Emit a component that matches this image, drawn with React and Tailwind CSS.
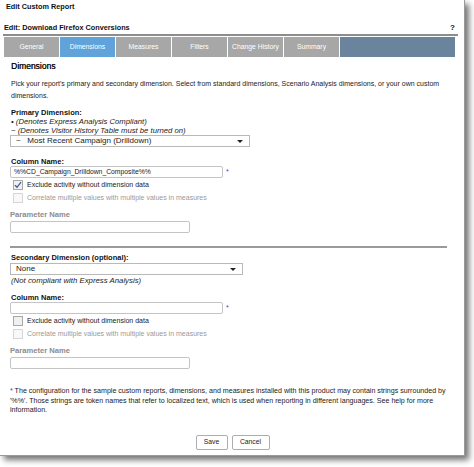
import React from "react";

const tabs = ["General", "Dimensions", "Measures", "Filters", "Change History", "Summary"];

function SelectBox({ value, width }) {
  return (
    <div
      className={`flex items-center justify-between h-[12px] border border-[#b9b9b9] bg-white pl-[5px] pr-[6px] text-[8px] leading-[10px] text-[#222] ${width}`}
    >
      <span className="whitespace-pre">{value}</span>
      <span className="w-0 h-0 border-l-[3px] border-r-[3px] border-t-[3px] border-l-transparent border-r-transparent border-t-[#222]" />
    </div>
  );
}

function TextBox({ value, width }) {
  return (
    <div
      className={`h-[12px] border border-[#c4c4c4] rounded-[2px] bg-white pl-[3px] text-[6.8px] leading-[10px] text-[#222] ${width}`}
    >
      {value}
    </div>
  );
}

function Check({ checked, disabled, label }) {
  return (
    <div className="flex items-center h-[13px] pl-[3px] gap-[4px]">
      <span
        className={`flex items-center justify-center w-[10px] h-[10px] border ${
          disabled ? "border-[#d6d6d6] bg-[#f8f8f8]" : "border-[#a8a8a8] bg-[#f0f0f0]"
        }`}
      >
        {checked && (
          <svg width="8" height="8" viewBox="0 0 8 8">
            <path d="M1 4.2 L3 6.3 L7 1.2" stroke="#3b5f9a" strokeWidth="1.3" fill="none" />
          </svg>
        )}
      </span>
      <span className={`text-[7px] leading-[10px] ${disabled ? "text-[#9a9a9a]" : "text-[#222]"}`}>
        {label}
      </span>
    </div>
  );
}

function DimensionBlock({ column, checked }) {
  return (
    <>
      <div className="flex items-center gap-[3px]">
        <TextBox value={column} width="w-[213px]" />
        <span className="text-[7px] leading-[8px] text-[#3344ee]">*</span>
      </div>
      <Check checked={checked} label="Exclude activity without dimension data" />
      <Check disabled label="Correlate multiple values with multiple values in measures" />
      <div className="mt-[6px] text-[7.6px] leading-[9px] font-bold text-[#8c8c8c]">Parameter Name</div>
      <div className="mt-[2px]">
        <TextBox value="" width="w-[180px]" />
      </div>
    </>
  );
}

export default function App() {
  return (
    <div className="w-[474px] h-[467px] bg-white" style={{ fontFamily: '"Liberation Sans", Arial, sans-serif' }}>
      <div className="w-[465px] h-[456px] bg-white shadow-[4px_4px_6px_rgba(0,0,0,0.55)] border-r border-b border-[#9a9a9a] text-[#111]">
        <div className="pl-[6px] pt-px text-[7.3px] leading-[11px] font-bold">Edit Custom Report</div>

        <div className="mt-[10px] flex items-end justify-between pl-[4px] pr-[9px] h-[12px]">
          <span className="text-[7.3px] leading-[12px] font-bold">Edit: Download Firefox Conversions</span>
          <span className="text-[8px] leading-[12px] font-bold">?</span>
        </div>

        <div className="ml-[3px] w-[455px] h-[2px] bg-[#8d8d8d]" />
        <div className="ml-[4px] w-[451px] flex gap-px mt-px h-[20px]">
          {tabs.map((t) => (
            <div
              key={t}
              className={`w-[55px] flex items-center justify-center text-[6.8px] text-white ${
                t === "Dimensions" ? "bg-[#5fa3da]" : "bg-[#a7a7a7]"
              }`}
            >
              {t}
            </div>
          ))}
          <div className="flex-1 bg-[#6a849d]" />
        </div>

        <div className="pl-[11px]">
          <div
            className="mt-[4px] text-[8.5px] leading-[11px] text-[#111]"
            style={{ textShadow: "0.3px 0 0 #111" }}
          >
            Dimensions
          </div>
          <p className="mt-[6px] w-[438px] text-[7px] leading-[12px] text-[#222]">
            Pick your report's primary and secondary dimension. Select from standard dimensions, Scenario Analysis
            dimensions, or your own custom dimensions.
          </p>

          <div className="mt-[6px] text-[7.5px] leading-[9px] font-bold">Primary Dimension:</div>
          <div className="text-[7.7px] leading-[9px] italic text-[#222]">• (Denotes Express Analysis Compliant)</div>
          <div className="text-[7.7px] leading-[9px] italic text-[#222]">~ (Denotes Visitor History Table must be turned on)</div>
          <div className="-ml-px">
            <SelectBox value="~   Most Recent Campaign (Drilldown)" width="w-[240px]" />
          </div>

          <div className="mt-[10px] text-[7.5px] leading-[9px] font-bold">Column Name:</div>
          <div className="-ml-px">
            <DimensionBlock column="%%CD_Campaign_Drilldown_Composite%%" checked />
          </div>

          <div className="mt-[13px] -ml-[1px] w-[437px] h-[2px] bg-[#9a9a9a]" />

          <div className="mt-[5px] text-[7.5px] leading-[9px] font-bold">Secondary Dimension (optional):</div>
          <div className="-ml-px mt-px">
            <SelectBox value="None" width="w-[233px]" />
          </div>
          <div className="mt-[1px] text-[7.8px] leading-[9px] italic text-[#222]">(Not compliant with Express Analysis)</div>

          <div className="mt-[8px] text-[7.5px] leading-[9px] font-bold">Column Name:</div>
          <div className="-ml-px">
            <DimensionBlock column="" />
          </div>

          <p className="mt-[18px] -ml-px w-[442px] text-[7.1px] leading-[9.5px] text-[#222]">
            <span className="text-[#3344ee]">*</span> The configuration for the sample custom reports, dimensions, and
            measures installed with this product may contain strings surrounded by '%%'. Those strings are token names
            that refer to localized text, which is used when reporting in different languages. See help for more
            information.
          </p>
        </div>

        <div className="mt-[19px] flex justify-center gap-[4px] pl-[1px]">
          <div className="w-[32px] h-[15px] flex items-center justify-center border border-[#adadad] rounded-[2px] bg-white text-[6.8px] text-[#222]">
            Save
          </div>
          <div className="w-[38px] h-[15px] flex items-center justify-center border border-[#adadad] rounded-[2px] bg-white text-[6.8px] text-[#222]">
            Cancel
          </div>
        </div>
      </div>
    </div>
  );
}
